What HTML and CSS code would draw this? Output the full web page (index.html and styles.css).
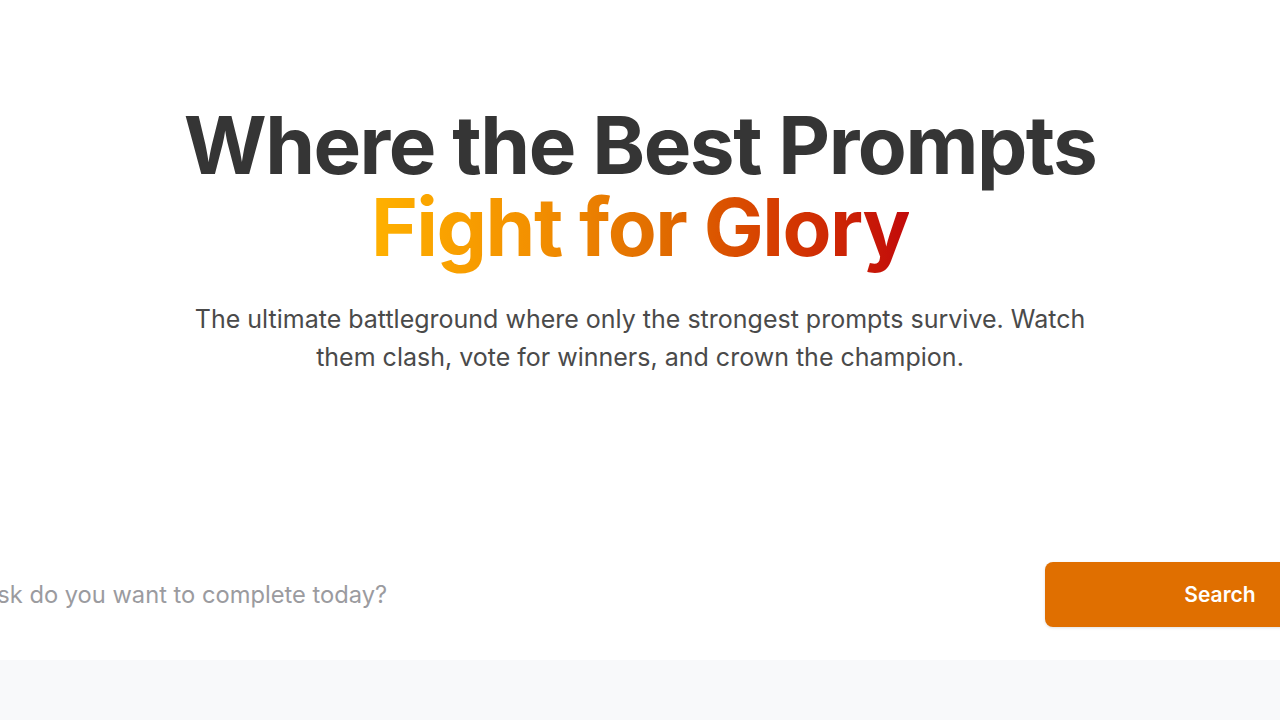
FILE: index.html
```html
<!DOCTYPE html>
<html lang="en">
<head>
<meta charset="utf-8">
<title>Prompt Arena</title>
<link rel="stylesheet" href="styles.css">
</head>
<body>
<section class="hero">
  <h1 class="title">
    <span class="line">Where the Best Prompts</span>
    <span class="line gradient">Fight for Glory</span>
  </h1>
  <p class="subtitle">The ultimate battleground where only the strongest prompts survive. Watch them clash, vote for winners, and crown the champion.</p>
  <div class="search-wrap">
    <form class="search">
      <input class="search-input" type="text" placeholder="What task do you want to complete today?">
      <button class="search-btn" type="button">Search</button>
    </form>
  </div>
</section>
<section class="below"></section>
</body>
</html>
```
FILE: styles.css
```css
html, body {
  margin: 0;
  padding: 0;
  background: #f8f9fa;
  overflow: hidden;
  font-family: Inter, "Noto Sans", sans-serif;
}
.hero {
  background: #ffffff;
  height: 660px;
  box-sizing: border-box;
  padding-top: 104px;
  box-shadow: 0 1px 1px rgba(0,0,0,0.13), 0 2px 8px rgba(0,0,0,0.06);
  position: relative;
  z-index: 1;
  display: flex;
  flex-direction: column;
  align-items: center;
}
.title {
  margin: 0;
  font-size: 80px;
  line-height: 82px;
  font-weight: 700;
  letter-spacing: -1.5px;
  color: #353535;
  text-align: center;
}
.line {
  display: block;
}
.gradient {
  background: linear-gradient(90deg, #ffb100 0%, #f39000 30%, #e06a00 55%, #d63d00 75%, #c20a0a 100%);
  -webkit-background-clip: text;
  background-clip: text;
  color: transparent;
  width: max-content;
  margin: 0 auto;
  padding-bottom: 20px;
}
.subtitle {
  margin: 12px 0 0;
  width: 920px;
  font-size: 25px;
  line-height: 38px;
  color: #4a4a4a;
  text-align: center;
}
.search-wrap {
  margin-top: 186px;
  width: 100%;
  display: flex;
  justify-content: center;
}
.search {
  flex-shrink: 0;
  width: 1510px;
  display: flex;
  align-items: center;
  gap: 20px;
}
.search-input {
  flex: 1;
  border: none;
  outline: none;
  background: transparent;
  font-family: Inter, "Noto Sans", sans-serif;
  font-size: 23.7px;
  padding: 0 0 0 26px;
  height: 65px;
  color: #333;
}
.search-input::placeholder {
  color: #9b9b9f;
}
.search-btn {
  width: 350px;
  height: 65px;
  border: none;
  border-radius: 8px;
  background: #e06f00;
  color: #ffffff;
  font-family: Inter, "Noto Sans", sans-serif;
  font-size: 21px;
  font-weight: 600;
  box-shadow: 0 1px 3px rgba(0,0,0,0.12);
}
```
